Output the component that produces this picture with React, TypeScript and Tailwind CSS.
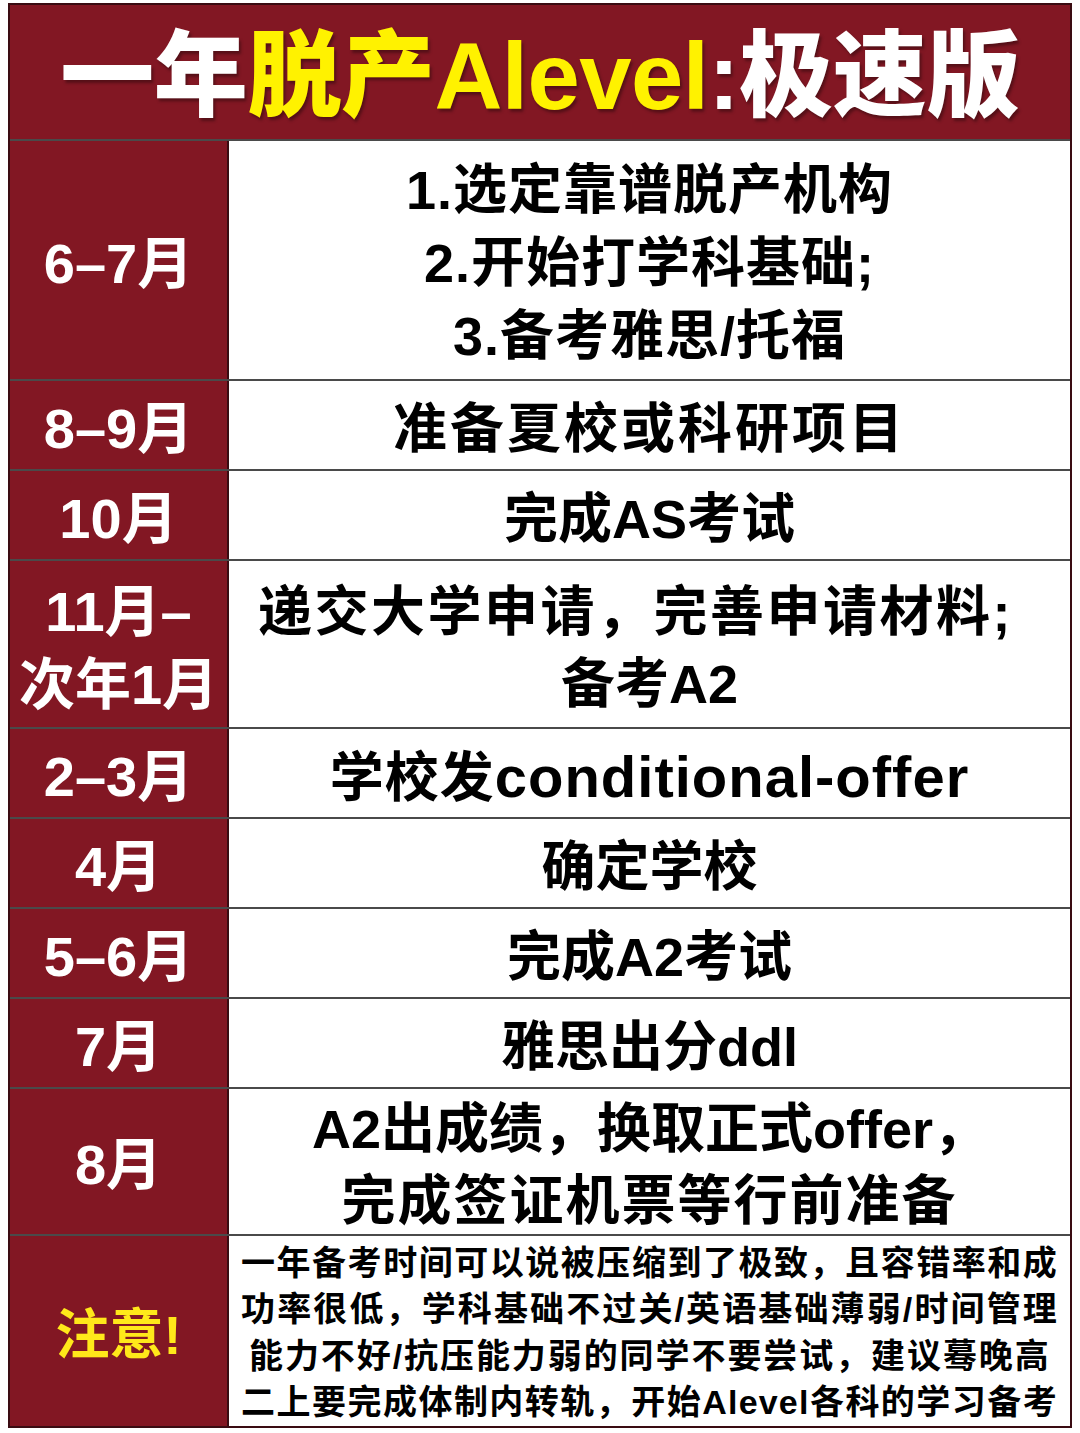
const rows: { label: React.ReactNode; h: string; content: React.ReactNode }[] = [
  {
    label: '6–7月',
    h: 'h-[240px]',
    content: (
      <div className="flex flex-col items-center leading-[73px]">
        <span className="tracking-[1px]">1.选定靠谱脱产机构</span>
        <span className="tracking-[1px]">2.开始打学科基础;</span>
        <span className="tracking-[1px]">3.备考雅思/托福</span>
      </div>
    ),
  },
  { label: '8–9月', h: 'h-[90px]', content: <span className="tracking-[3px]">准备夏校或科研项目</span> },
  { label: '10月', h: 'h-[90px]', content: '完成AS考试' },
  {
    label: (
      <div className="flex flex-col items-center leading-[73px]">
        <span>11月–</span>
        <span>次年1月</span>
      </div>
    ),
    h: 'h-[168px]',
    content: (
      <div className="flex flex-col items-center leading-[72px] pr-[28px]">
        <span className="tracking-[2.5px]">递交大学申请，完善申请材料;</span>
        <span className="pl-[28px]">备考A2</span>
      </div>
    ),
  },
  {
    label: '2–3月',
    h: 'h-[90px]',
    content: <span className="tracking-[1px]">学校发<span className="text-[58px]">conditional-offer</span></span>,
  },
  { label: '4月', h: 'h-[90px]', content: '确定学校' },
  { label: '5–6月', h: 'h-[90px]', content: '完成A2考试' },
  { label: '7月', h: 'h-[90px]', content: '雅思出分ddl' },
  {
    label: '8月',
    h: 'h-[147px]',
    content: (
      <div className="flex flex-col items-center leading-[72px]">
        <span>A2出成绩，换取正式offer，</span>
        <span className="tracking-[2px]">完成签证机票等行前准备</span>
      </div>
    ),
  },
];

const note = [
  '一年备考时间可以说被压缩到了极致，且容错率和成',
  '功率很低，学科基础不过关/英语基础薄弱/时间管理',
  '能力不好/抗压能力弱的同学不要尝试，建议蓦晚高',
  '二上要完成体制内转轨，开始Alevel各科的学习备考',
];

export default function App() {
  return (
    <div className="w-[1080px] h-[1433px] bg-white pt-[3px] pl-[8px] font-['Liberation_Sans','Noto_Sans_CJK_SC',sans-serif]">
      <div className="w-[1064px] border-2 border-[#3a0c12] flex flex-col">
        {/* Title */}
        <div className="h-[134px] pt-[10px] bg-[#821723] flex items-center justify-center font-black text-[94px] leading-none tracking-[-0.5px] [text-shadow:2px_3px_3px_rgba(0,0,0,0.35)]">
          <span className="text-white">一年</span>
          <span className="text-[#fff200]">脱产Alevel</span>
          <span className="text-white">:极速版</span>
        </div>

        {rows.map((r, i) => (
          <div key={i} className={`flex border-t-2 border-[#4a4a4a] ${r.h}`}>
            <div className="w-[219px] shrink-0 pt-[7px] bg-[#821723] border-r-2 border-[#3a0c12] flex items-center justify-center text-white font-bold text-[56px] leading-none">
              {r.label}
            </div>
            <div className="flex-1 pt-[7px] flex items-center justify-center text-black font-bold text-[54px] leading-none">
              {r.content}
            </div>
          </div>
        ))}

        {/* Note */}
        <div className="flex border-t-2 border-[#4a4a4a] h-[192px]">
          <div className="w-[219px] shrink-0 pt-[7px] bg-[#821723] border-r-2 border-[#3a0c12] flex items-center justify-center text-[#ffe81a] font-bold text-[54px] leading-none">
            注意!
          </div>
          <div className="flex-1 pt-[3px] flex flex-col justify-center pl-[12px] pr-[12px] text-black font-bold text-[34px] leading-[46.5px] tracking-[1.2px] whitespace-nowrap">
            {note.map((l, i) => (
              <span key={i} className={`block text-justify [text-align-last:justify] ${i === 2 ? 'px-[8px]' : ''}`}>
                {l}
              </span>
            ))}
          </div>
        </div>
      </div>
    </div>
  );
}
